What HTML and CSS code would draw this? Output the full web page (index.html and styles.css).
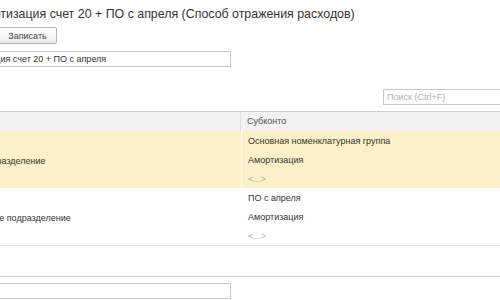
FILE: index.html
```html
<!DOCTYPE html>
<html lang="ru">
<head>
<meta charset="utf-8">
<link rel="stylesheet" href="styles.css">
</head>
<body>
<div class="page">
  <h1 class="title">Амортизация счет 20 + ПО с апреля (Способ отражения расходов)</h1>
  <div class="toolbar">
    <button class="btn">Записать</button>
  </div>
  <div class="field">
    <div class="input">Амортизация счет 20 + ПО с апреля</div>
  </div>
  <div class="search-row">
    <div class="search">Поиск (Ctrl+F)</div>
  </div>
  <div class="table">
    <div class="thead">
      <div class="th th-left"></div>
      <div class="th">Субконто</div>
    </div>
    <div class="group current">
      <div class="left indent-1">Подразделение</div>
      <div class="cell">Основная номенклатурная группа</div>
      <div class="cell">Амортизация</div>
      <div class="cell empty">&lt;...&gt;</div>
    </div>
    <div class="group">
      <div class="left indent-2">Основное подразделение</div>
      <div class="cell">ПО с апреля</div>
      <div class="cell">Амортизация</div>
      <div class="cell empty">&lt;...&gt;</div>
    </div>
  </div>
  <div class="divider"></div>
  <div class="field bottom">
    <div class="input"></div>
  </div>
</div>
</body>
</html>
```

FILE: styles.css
```css
html, body {
  margin: 0;
  padding: 0;
  background: #fff;
  overflow: hidden;
}
body {
  width: 500px;
  height: 300px;
  font-family: "Liberation Sans", Arial, sans-serif;
  color: #4d4d4d;
}
.page {
  width: 600px;
  margin-left: -50px;
}
.title {
  margin: 0;
  padding: 6px 0 0 20px;
  height: 17px;
  font-size: 12.4px;
  font-weight: normal;
  line-height: 16px;
  color: #333;
  white-space: nowrap;
}
.toolbar {
  padding: 4px 0 0 48px;
  height: 17px;
}
.btn {
  display: block;
  width: 59px;
  height: 17px;
  padding: 0;
  border: 1px solid #b3b3b3;
  border-radius: 2px;
  background: linear-gradient(#fff, #ececec);
  font-family: "Liberation Sans", Arial, sans-serif;
  font-size: 9px;
  color: #444;
  text-align: center;
}
.field {
  padding: 7px 0 0 1px;
}
.input {
  width: 275px;
  height: 14px;
  border: 1px solid #c8c8c8;
  font-size: 9px;
  line-height: 14px;
  padding-left: 3px;
  color: #333;
  white-space: nowrap;
}
.search-row {
  display: flex;
  justify-content: flex-end;
  padding: 22px 30px 0 0;
}
.search {
  width: 132px;
  height: 14px;
  border: 1px solid #c8c8c8;
  padding-left: 3px;
  font-size: 9px;
  line-height: 14px;
  color: #b0b0b0;
}
.table {
  margin-top: 6px;
  border-bottom: 1px solid #e6e6e6;
}
.thead {
  display: grid;
  grid-template-columns: 291px 1fr;
  height: 19px;
  background: #f2f2f2;
  border-top: 1px solid #d0d0d0;
}
.th {
  font-size: 9px;
  line-height: 19px;
  padding-left: 6px;
  color: #4d4d4d;
}
.th-left {
  border-right: 1px solid #dedede;
}
.group {
  display: grid;
  grid-template-columns: 291px 1fr;
  grid-template-rows: repeat(3, 19px);
}
.group.current {
  background: #fcf0c8;
}
.left {
  grid-column: 1;
  grid-row: 1 / 4;
  align-self: center;
  padding-top: 2px;
  font-size: 9px;
  color: #333;
  white-space: nowrap;
}
.indent-1 {
  padding-left: 30px;
}
.indent-2 {
  padding-left: 13px;
}
.cell {
  grid-column: 2;
  font-size: 9px;
  line-height: 17px;
  padding: 2px 0 0 6px;
  color: #333;
  border-left: 1px solid rgba(255,255,255,0.6);
}
.cell.empty {
  color: #aaa;
}
.divider {
  margin-top: 30px;
  border-top: 1px solid #cfcfcf;
}
.field.bottom {
  padding-top: 6px;
}
```
